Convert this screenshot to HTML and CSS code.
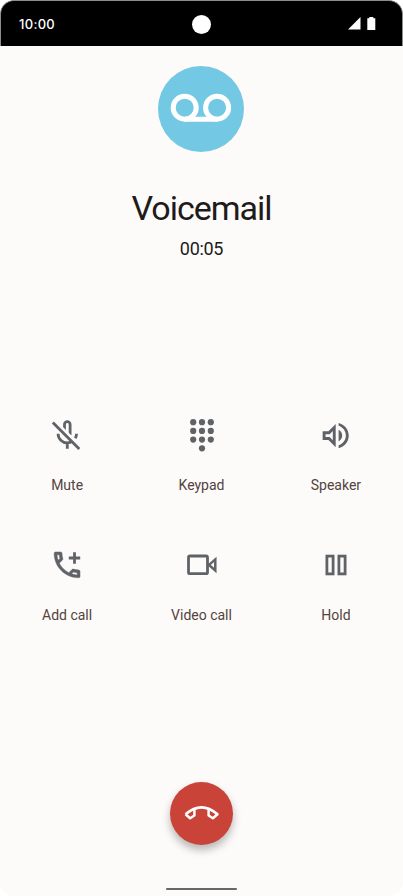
FILE: index.html
```html
<!DOCTYPE html>
<html lang="en">

<head>
    <meta charset="UTF-8">
    <meta name="viewport" content="width=device-width, initial-scale=1.0">
    <title>Voicemail</title>
    <link rel="stylesheet" href="styles.css">
</head>

<body>
    <div class="phone">
        <header class="status">
            <span class="clock">10:00</span>
            <span class="camera"></span>
            <svg class="signal" viewBox="0 0 28 14">
                <path d="M0 12.500L12.500 0v12.500z" />
                <path d="M19.300 1.300h2V0h4v1.300h2V13h-8z" />
            </svg>
        </header>

        <main class="call">
            <div class="avatar">
                <svg viewBox="0 0 86 86">
                    <circle cx="26.700" cy="41.700" r="11.500" />
                    <circle cx="59.100" cy="41.700" r="11.500" />
                    <path d="M26.700 53.200h32.400" />
                </svg>
            </div>
            <h1 class="name">Voicemail</h1>
            <p class="time">00:05</p>

            <ul class="actions">
                <li>
                    <svg class="icon line" viewBox="0 0 36 36">
                        <path d="M15.500 17V7.500a2.800 2.800 0 0 1 5.600 0V18" />
                        <path d="M9.100 16.700a9.200 9.200 0 0 0 9.200 9.200q3 0 5.500-2M27.500 16.700q0 2.500-1.300 4.500M18.300 25.500v6.300" />
                        <path class="gap" d="M6 4.800l25 25" />
                        <path d="M3.800 5.600l26.500 26.500" />
                    </svg>
                    <span>Mute</span>
                </li>
                <li>
                    <svg class="icon" viewBox="0 0 36 36">
                        <circle cx="9.200" cy="5.200" r="3.100" />
                        <circle cx="18" cy="5.200" r="3.100" />
                        <circle cx="26.800" cy="5.200" r="3.100" />
                        <circle cx="9.200" cy="13.900" r="3.100" />
                        <circle cx="18" cy="13.900" r="3.100" />
                        <circle cx="26.800" cy="13.900" r="3.100" />
                        <circle cx="9.200" cy="22.600" r="3.100" />
                        <circle cx="18" cy="22.600" r="3.100" />
                        <circle cx="26.800" cy="22.600" r="3.100" />
                        <circle cx="18" cy="31.300" r="3.100" />
                    </svg>
                    <span>Keypad</span>
                </li>
                <li>
                    <svg class="icon" viewBox="0 0 36 36">
                        <path transform="translate(.3 1.200) scale(1.450)" d="M3 9v6h4l5 5V4L7 9H3zm7-.17v6.340L7.830 13H5v-2h2.830L10 8.830zM16.500 12c0-1.770-1.020-3.290-2.500-4.030v8.050c1.480-.73 2.500-2.250 2.500-4.020zM14 3.230v2.060c2.890.86 5 3.540 5 6.710s-2.110 5.850-5 6.710v2.060c4.010-.91 7-4.490 7-8.770s-2.990-7.860-7-8.770z" />
                    </svg>
                    <span>Speaker</span>
                </li>
                <li>
                    <svg class="icon" viewBox="0 0 36 36">
                        <path class="bold" transform="translate(.8 .6) scale(1.440)" d="M6.540 5c.06.89.21 1.760.45 2.590l-1.200 1.200c-.41-1.200-.67-2.470-.76-3.790h1.510m9.860 12.020c.85.24 1.720.39 2.600.45v1.490c-1.320-.09-2.590-.35-3.800-.75l1.200-1.190M7.500 3H4c-.55 0-1 .45-1 1 0 9.390 7.610 17 17 17 .55 0 1-.45 1-1v-3.490c0-.55-.45-1-1-1-1.240 0-2.450-.2-3.570-.57-.1-.04-.21-.05-.31-.05-.26 0-.51.1-.71.29l-2.200 2.200c-2.830-1.450-5.150-3.760-6.590-6.590l2.200-2.200c.28-.28.36-.67.25-1.020C8.700 6.450 8.500 5.250 8.500 4c0-.55-.45-1-1-1z" />
                        <path d="M24.100 5.300h2.800v4.300h4.300v2.800h-4.300v4.300h-2.800v-4.300h-4.300V9.600h4.300z" />
                    </svg>
                    <span>Add call</span>
                </li>
                <li>
                    <svg class="icon line" viewBox="0 0 36 36">
                        <rect x="4.500" y="9" width="19" height="17.700" rx="1.500" />
                        <path class="thin" d="M25 17.900l6.300-5.500v11z" />
                    </svg>
                    <span>Video call</span>
                </li>
                <li>
                    <svg class="icon line" viewBox="0 0 36 36">
                        <rect x="8.900" y="9.100" width="6.200" height="17.800" />
                        <rect x="20.900" y="9.100" width="6.200" height="17.800" />
                    </svg>
                    <span>Hold</span>
                </li>
            </ul>

            <button class="hangup" aria-label="End call">
                <svg viewBox="0 0 63 63">
                    <path d="M15.500 32.300Q31.500 18.500 47.500 32.300L42.900 36.300L38.600 33.500V27.300M15.500 32.300L20.100 36.300L24.400 33.500V27.300" />
                </svg>
            </button>
            <div class="homebar"></div>
        </main>
    </div>
</body>

</html>
```
FILE: styles.css
```css
* {
    margin: 0;
    padding: 0;
    box-sizing: border-box;
}

body {
    background: #fff;
    font-family: Roboto, "Liberation Sans", sans-serif;
}

ul {
    list-style: none;
}

.phone {
    height: 896px;
    border-radius: 14px;
    background: #fdfbf9;
    overflow: hidden;
}

.status {
    display: grid;
    grid-template-columns: 1fr 19px 1fr;
    align-items: center;
    height: 46px;
    padding: 0 26px 0 18px;
    border: 1px solid #8b8d8c;
    border-bottom: 0;
    border-radius: 14px 14px 0 0;
    background: #000;
}

.clock {
    color: #fff;
    font: 500 13px Inter, sans-serif;
    letter-spacing: .3px;
}

.camera {
    width: 19px;
    height: 19px;
    margin: 2px 0 0 4px;
    border-radius: 50%;
    background: #fff;
}

.signal {
    justify-self: end;
    width: 28px;
    height: 14px;
    fill: #fff;
}

.call {
    display: flex;
    flex-direction: column;
    align-items: center;
    padding-top: 20px;
}

.avatar {
    width: 86px;
    height: 86px;
    margin-right: 1px;
    border-radius: 50%;
    background: #73c9e3;
}

.avatar svg {
    display: block;
    fill: none;
    stroke: #fff;
    stroke-width: 5;
}

.name {
    margin-top: 36px;
    line-height: 41px;
    font-size: 34px;
    font-weight: 400;
    letter-spacing: -1px;
    color: #201a19;
}

.time {
    margin-top: 9px;
    line-height: 22px;
    font-size: 18px;
    letter-spacing: -.3px;
    color: #201a19;
}

.actions {
    display: grid;
    grid-template-columns: repeat(3, 134.400px);
    grid-auto-rows: 130px;
    margin-top: 157px;
}

.actions li {
    display: flex;
    flex-direction: column;
    align-items: center;
    gap: 22px;
}

.actions span {
    line-height: 20px;
    font-size: 14px;
    letter-spacing: 0;
    color: #534341;
}

.icon {
    width: 36px;
    height: 36px;
    fill: #5f6368;
}

.bold {
    stroke: #5f6368;
    stroke-width: .3;
}

.line {
    fill: none;
    stroke: #5f6368;
    stroke-width: 2.800;
}

.line .thin {
    stroke-width: 2.500;
}

.line .gap {
    stroke: #fdfbf9;
    stroke-width: 4;
}

.hangup {
    width: 63px;
    height: 63px;
    margin-top: 105px;
    border: 0;
    border-radius: 50%;
    background: #c94338;
    box-shadow: 0 5px 8px rgba(0, 0, 0, .28);
}

.hangup svg {
    display: block;
    fill: none;
    stroke: #fff;
    stroke-width: 2.500;
    stroke-linejoin: round;
}

.homebar {
    width: 71px;
    height: 2px;
    margin-top: 43px;
    border-radius: 1px;
    background: #696766;
}
```
